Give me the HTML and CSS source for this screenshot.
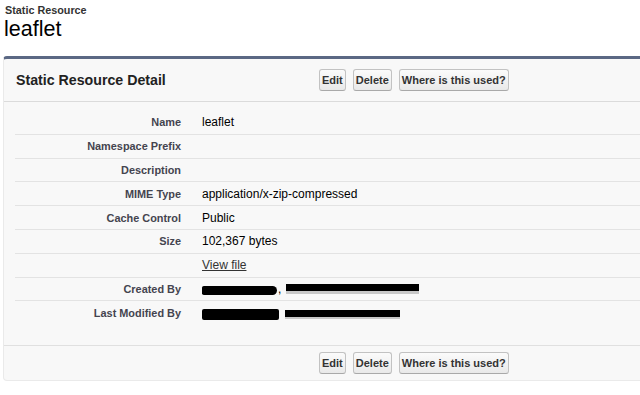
FILE: index.html
```html
<!DOCTYPE html>
<html lang="en">
<head>
    <meta charset="UTF-8">
    <meta name="viewport" content="width=device-width, initial-scale=1.0">
    <title>Static Resource - leaflet</title>
    <link rel="stylesheet" href="styles.css">
</head>
<body>
    <div class="page-head">
        <h2 class="page-type">Static Resource</h2>
        <h1 class="page-title">leaflet</h1>
    </div>

    <div class="panel">
        <div class="panel-head">
            <h3 class="panel-title">Static Resource Detail</h3>
            <div class="buttons">
                <button class="btn">Edit</button>
                <button class="btn">Delete</button>
                <button class="btn">Where is this used?</button>
            </div>
        </div>

        <div class="detail-list">
            <div class="row"><div class="label">Name</div><div class="value">leaflet</div></div>
            <div class="row"><div class="label">Namespace Prefix</div><div class="value"></div></div>
            <div class="row"><div class="label">Description</div><div class="value"></div></div>
            <div class="row"><div class="label">MIME Type</div><div class="value">application/x-zip-compressed</div></div>
            <div class="row"><div class="label">Cache Control</div><div class="value">Public</div></div>
            <div class="row"><div class="label">Size</div><div class="value">102,367 bytes</div></div>
            <div class="row"><div class="label"></div><div class="value"><a href="#" class="file-link">View file</a></div></div>
            <div class="row">
                <div class="label">Created By</div>
                <div class="value">
                    <span class="redact redact-name"></span>,
                    <span class="redact redact-date"></span>
                </div>
            </div>
            <div class="row last">
                <div class="label">Last Modified By</div>
                <div class="value">
                    <span class="redact redact-name2"></span>
                    <span class="redact redact-date2"></span>
                </div>
            </div>
        </div>

        <div class="panel-foot">
            <div class="buttons">
                <button class="btn">Edit</button>
                <button class="btn">Delete</button>
                <button class="btn">Where is this used?</button>
            </div>
        </div>
    </div>
</body>
</html>
```

FILE: styles.css
```css
* {
    margin: 0;
    padding: 0;
    box-sizing: border-box;
}

body {
    font-family: "Liberation Sans", Arial, sans-serif;
    background-color: #fff;
    color: #000;
    overflow: hidden;
}

.page-head {
    padding: 4px 0 0 5px;
    height: 56px;
}

.page-type {
    font-size: 10.8px;
    font-weight: bold;
    color: #333;
    line-height: 13px;
}

.page-title {
    font-size: 21.5px;
    font-weight: normal;
    line-height: 24px;
    margin-left: -1px;
}

/* the panel runs on past the right edge of the window */
.panel {
    margin-left: 3px;
    width: 637px;
    background-color: #f8f8f8;
    border: 1px solid #eaeaea;
    border-right: none;
    border-top: 3px solid #5b6884;
    border-radius: 4px 0 0 4px;
}

.panel-head {
    display: flex;
    align-items: center;
    height: 43px;
    border-bottom: 1px solid #dbdbdb;
}

.panel-title {
    width: 315px;
    padding-left: 12px;
    font-size: 14.2px;
    font-weight: bold;
    color: #222;
}

.buttons {
    display: flex;
    gap: 7px;
}

.btn {
    font-family: "Liberation Sans", Arial, sans-serif;
    font-size: 11px;
    font-weight: bold;
    color: #333;
    height: 22px;
    padding: 0 2px;
    background: linear-gradient(#fbfbfb, #e9e9e9);
    border: 1px solid #c2c2c2;
    border-bottom-color: #a9a9a9;
    border-radius: 3px;
}

.detail-list {
    padding: 9px 0 20px 11px;
}

.row {
    display: flex;
    align-items: center;
    height: 23.8px;
    border-bottom: 1px solid #e3e3e3;
}

.row.last {
    border-bottom: none;
}

.label {
    width: 166px;
    text-align: right;
    font-size: 10.9px;
    font-weight: bold;
    color: #44444f;
}

.value {
    padding-left: 21px;
    font-size: 12px;
    color: #000;
    display: flex;
    align-items: center;
}

.file-link {
    color: #333;
    text-decoration: underline;
}

.redact {
    display: inline-block;
    background-color: #000;
}

.redact-name {
    width: 75px;
    height: 9px;
    border-radius: 2px 5px 5px 2px;
    margin-top: 3px;
    margin-right: 1px;
}

.redact-date {
    width: 133px;
    height: 7px;
    margin-left: 5px;
    margin-top: -3px;
    box-shadow: 0 3px 0 #c8c8c8;
}

.redact-name2 {
    width: 77px;
    height: 11px;
    border-radius: 2px;
    margin-top: 2px;
}

.redact-date2 {
    width: 115px;
    height: 7px;
    margin-left: 6px;
    box-shadow: 0 2px 0 #c8c8c8;
}

.panel-foot {
    border-top: 1px solid #e0e0e0;
    padding: 6px 0 6px 315px;
}
```
